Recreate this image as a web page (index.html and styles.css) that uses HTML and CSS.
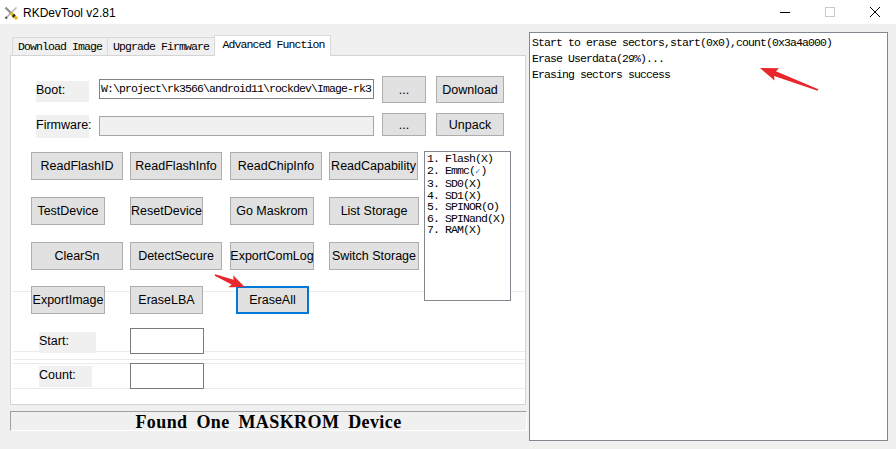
FILE: index.html
```html
<!DOCTYPE html>
<html lang="en">
<head>
<meta charset="utf-8">
<title>RKDevTool v2.81</title>
<link rel="stylesheet" href="styles.css">
</head>
<body>
<div class="titlebar">
  <svg class="app-icon" viewBox="0 0 16 16" width="16" height="16">
    <path d="M13.5 2.5 L4 12" stroke="#b4b4b4" stroke-width="1.6" fill="none"/>
    <path d="M2.5 2.5 L8 8" stroke="#8c8c8c" stroke-width="2.2" fill="none"/>
    <path d="M8 8 L14 14" stroke="#e6b800" stroke-width="3" fill="none"/>
    <path d="M10 10 L11.5 11.5" stroke="#222" stroke-width="3.2" fill="none"/>
    <path d="M4 12 L2.5 13.5" stroke="#444" stroke-width="2" fill="none"/>
  </svg>
  <span class="title">RKDevTool v2.81</span>
  <div class="controls">
    <div class="ctl"><svg width="10" height="10" viewBox="0 0 10 10"><path d="M0 5.5 H10" stroke="#000" stroke-width="1"/></svg></div>
    <div class="ctl"><svg width="10" height="10" viewBox="0 0 10 10"><rect x="0.5" y="0.5" width="9" height="9" fill="none" stroke="#c8c8c8" stroke-width="1"/></svg></div>
    <div class="ctl"><svg width="10" height="10" viewBox="0 0 10 10"><path d="M0 0 L10 10 M10 0 L0 10" stroke="#000" stroke-width="1"/></svg></div>
  </div>
</div>

<div class="main">
  <div class="left">
    <div class="tabs mono">
      <div class="tab">Download Image</div>
      <div class="tab">Upgrade Firmware</div>
      <div class="tab tab-active">Advanced Function</div>
    </div>
    <div class="panel">
      <div class="row boot-row">
        <div class="lbl lbl-boot">Boot:</div>
        <div class="field mono">W:\project\rk3566\android11\rockdev\Image-rk3</div>
        <button class="btn btn-dots">...</button>
        <button class="btn btn-act">Download</button>
      </div>
      <div class="row fw-row">
        <div class="lbl lbl-fw">Firmware:</div>
        <div class="field field-disabled"></div>
        <button class="btn btn-dots btn-short">...</button>
        <button class="btn btn-act btn-short">Unpack</button>
      </div>
      <div class="ctrl-area">
        <div class="grid">
          <button class="btn w92">ReadFlashID</button>
          <button class="btn w92">ReadFlashInfo</button>
          <button class="btn w92">ReadChipInfo</button>
          <button class="btn w89">ReadCapability</button>

          <button class="btn w74">TestDevice</button>
          <button class="btn w73">ResetDevice</button>
          <button class="btn w84">Go Maskrom</button>
          <button class="btn w90">List Storage</button>

          <button class="btn w92">ClearSn</button>
          <button class="btn w92">DetectSecure</button>
          <button class="btn w84">ExportComLog</button>
          <button class="btn w90">Switch Storage</button>

          <button class="btn w74 up">ExportImage</button>
          <button class="btn w73 up">EraseLBA</button>
          <button class="btn w73 up focused">EraseAll</button>
        </div>
        <div class="listbox mono">
          <div class="ln">1. Flash(X)</div>
          <div class="ln">2. Emmc(<span class="chk">✓</span>)</div>
          <div class="ln">3. SD0(X)</div>
          <div class="ln">4. SD1(X)</div>
          <div class="ln">5. SPINOR(O)</div>
          <div class="ln">6. SPINand(X)</div>
          <div class="ln">7. RAM(X)</div>
        </div>
      </div>
      <div class="row start-row">
        <div class="lbl lbl-start">Start:</div>
        <div class="input"></div>
      </div>
      <div class="row count-row">
        <div class="lbl lbl-count">Count:</div>
        <div class="input"></div>
      </div>
    </div>
    <div class="status">Found One MASKROM Device</div>
  </div>
  <div class="log mono">
    <div class="ln">Start to erase sectors,start(0x0),count(0x3a4a000)</div>
    <div class="ln">Erase Userdata(29%)...</div>
    <div class="ln">Erasing sectors success</div>
  </div>
</div>

<svg class="overlay" width="896" height="449" viewBox="0 0 896 449">
  <polygon class="arrow" transform="translate(215 275) rotate(21.8)" points="0,-0.8 19,-2.6 17,-6.5 32,0 17,6.5 19,2.6 0,0.8"/>
  <polygon class="arrow" transform="translate(818 90) rotate(200.8)" points="0,-0.9 46,-2.6 44,-6.5 62,0 44,6.5 46,2.6 0,0.9"/>
</svg>
</body>
</html>
```
FILE: styles.css
```css
* { box-sizing: border-box; }
html, body { margin: 0; padding: 0; }
body {
  width: 896px;
  height: 449px;
  background: #f0f0f0;
  font-family: "Liberation Sans", Arial, sans-serif;
  color: #000;
  overflow: hidden;
  position: relative;
}
.mono {
  font-family: "Liberation Mono", "Courier New", monospace;
  font-size: 11.5px;
  letter-spacing: -0.9px;
}
.ln { white-space: pre; }

/* title bar */
.titlebar {
  height: 24px;
  background: #fff;
  display: flex;
  align-items: center;
}
.app-icon { margin-left: 3px; margin-top: 1px; }
.title { margin-left: 4px; font-size: 12px; margin-top: 1px; }
.controls { margin-left: auto; margin-right: -1px; display: flex; }
.ctl {
  width: 45px;
  height: 24px;
  display: flex;
  align-items: center;
  justify-content: center;
}

/* main */
.main { display: flex; padding-left: 10px; }
.left { width: 517px; margin-top: 11px; }

.tabs {
  display: flex;
  align-items: flex-end;
  height: 20px;
  padding-left: 2px;
  position: relative;
  z-index: 1;
}
.tab {
  height: 18px;
  line-height: 17px;
  padding: 0 5px;
  border: 1px solid #d9d9d9;
  border-bottom: none;
  border-right: none;
  background: #f0f0f0;
  white-space: nowrap;
}
.tab-active {
  height: 21px;
  line-height: 17px;
  margin-bottom: -1px;
  background: #fff;
  border-right: 1px solid #d9d9d9;
  padding: 0 5.5px 0 7.5px;
}

.panel {
  width: 516px;
  height: 350px;
  border: 1px solid #d4d4d4;
  background-color: #fff;
  background-image:
    linear-gradient(#ebebeb, #ebebeb),
    linear-gradient(#ebebeb, #ebebeb),
    linear-gradient(#ebebeb, #ebebeb),
    linear-gradient(#ebebeb, #ebebeb),
    linear-gradient(#ebebeb, #ebebeb);
  background-repeat: no-repeat;
  background-size: calc(100% - 2px) 1px;
  background-position: 2px 235px, 2px 295px, 2px 303px, 2px 307px, 2px 332px;
}

.row { display: flex; align-items: flex-start; }
.boot-row { margin-top: 20px; padding-left: 25px; }
.fw-row { margin-top: 10px; padding-left: 25px; }

.lbl {
  background: #f0f0f0;
  font-size: 12.5px;
  line-height: 18px;
  white-space: nowrap;
}
.lbl-boot { width: 53px; height: 21px; margin-top: 5px; }
.lbl-fw { width: 53px; height: 23px; margin-top: 2px; line-height: 20px; }

.field {
  margin-left: 10px;
  width: 275px;
  height: 20px;
  margin-top: 3px;
  border: 1px solid #828282;
  background: #fff;
  line-height: 17px;
  padding-left: 1px;
  white-space: nowrap;
  overflow: hidden;
}
.field-disabled { background: #f0f0f0; border-color: #a6a6a6; }

.btn {
  font-family: "Liberation Sans", Arial, sans-serif;
  font-size: 12.5px;
  color: #000;
  background: #e1e1e1;
  border: 1px solid #adadad;
  height: 28px;
  padding: 0;
  margin: 0;
  display: flex;
  align-items: center;
  justify-content: center;
  white-space: nowrap;
}
.btn-dots { margin-left: 8px; width: 44px; height: 27px; }
.btn-act { margin-left: 10px; width: 68px; height: 27px; }
.btn-short { height: 23px; }

.ctrl-area {
  display: flex;
  align-items: flex-start;
  margin-top: 13px;
  padding-left: 20px;
}
.grid {
  display: grid;
  grid-template-columns: 99px 100px 99px 90px;
  grid-auto-rows: 28px;
  row-gap: 17px;
  margin-top: 1px;
  align-items: start;
}
.w92 { width: 92px; }
.w89 { width: 89px; }
.w90 { width: 90px; }
.w84 { width: 84px; }
.w74 { width: 74px; }
.w73 { width: 73px; }
.up { margin-top: -1px; }
.focused { border: 2px solid #0078d7; margin-left: 6px; }

.listbox {
  margin-left: 5px;
  width: 87px;
  height: 150px;
  border: 1px solid #828790;
  background: #fff;
  padding: 1px 0 0 2px;
  line-height: 11.5px;
  font-size: 11.5px;
}
.chk { color: #3d7cc9; font-size: 9px; letter-spacing: 0; }

.start-row { margin-top: 13px; padding-left: 28px; }
.count-row { margin-top: 9px; padding-left: 28px; }
.lbl-start { width: 57px; height: 21px; margin-top: 4px; }
.lbl-count { width: 53px; height: 21px; margin-top: 3px; }
.input {
  width: 74px;
  height: 26px;
  background: #fff;
  border: 1px solid #7a7a7a;
}
.lbl-start + .input { margin-left: 34px; }
.lbl-count + .input { margin-left: 38px; }

.status {
  margin-top: 6px;
  height: 20px;
  padding-top: 3px;
  border-top: 1px solid #a0a0a0;
  border-left: 1px solid #a0a0a0;
  border-right: 1px solid #fff;
  border-bottom: 1px solid #fff;
  display: flex;
  align-items: center;
  justify-content: center;
  font-family: "Liberation Serif", "Times New Roman", serif;
  font-weight: bold;
  font-size: 18px;
  letter-spacing: 0.4px;
  word-spacing: 4px;
  white-space: pre;
}

.log {
  margin-left: 2px;
  margin-top: 8px;
  width: 359px;
  height: 409px;
  border: 1px solid #828790;
  background: #fff;
  padding: 2px 0 0 2px;
  line-height: 16px;
}

.overlay {
  position: absolute;
  left: 0;
  top: 0;
  pointer-events: none;
}
.arrow { fill: #e8262b; }
```
